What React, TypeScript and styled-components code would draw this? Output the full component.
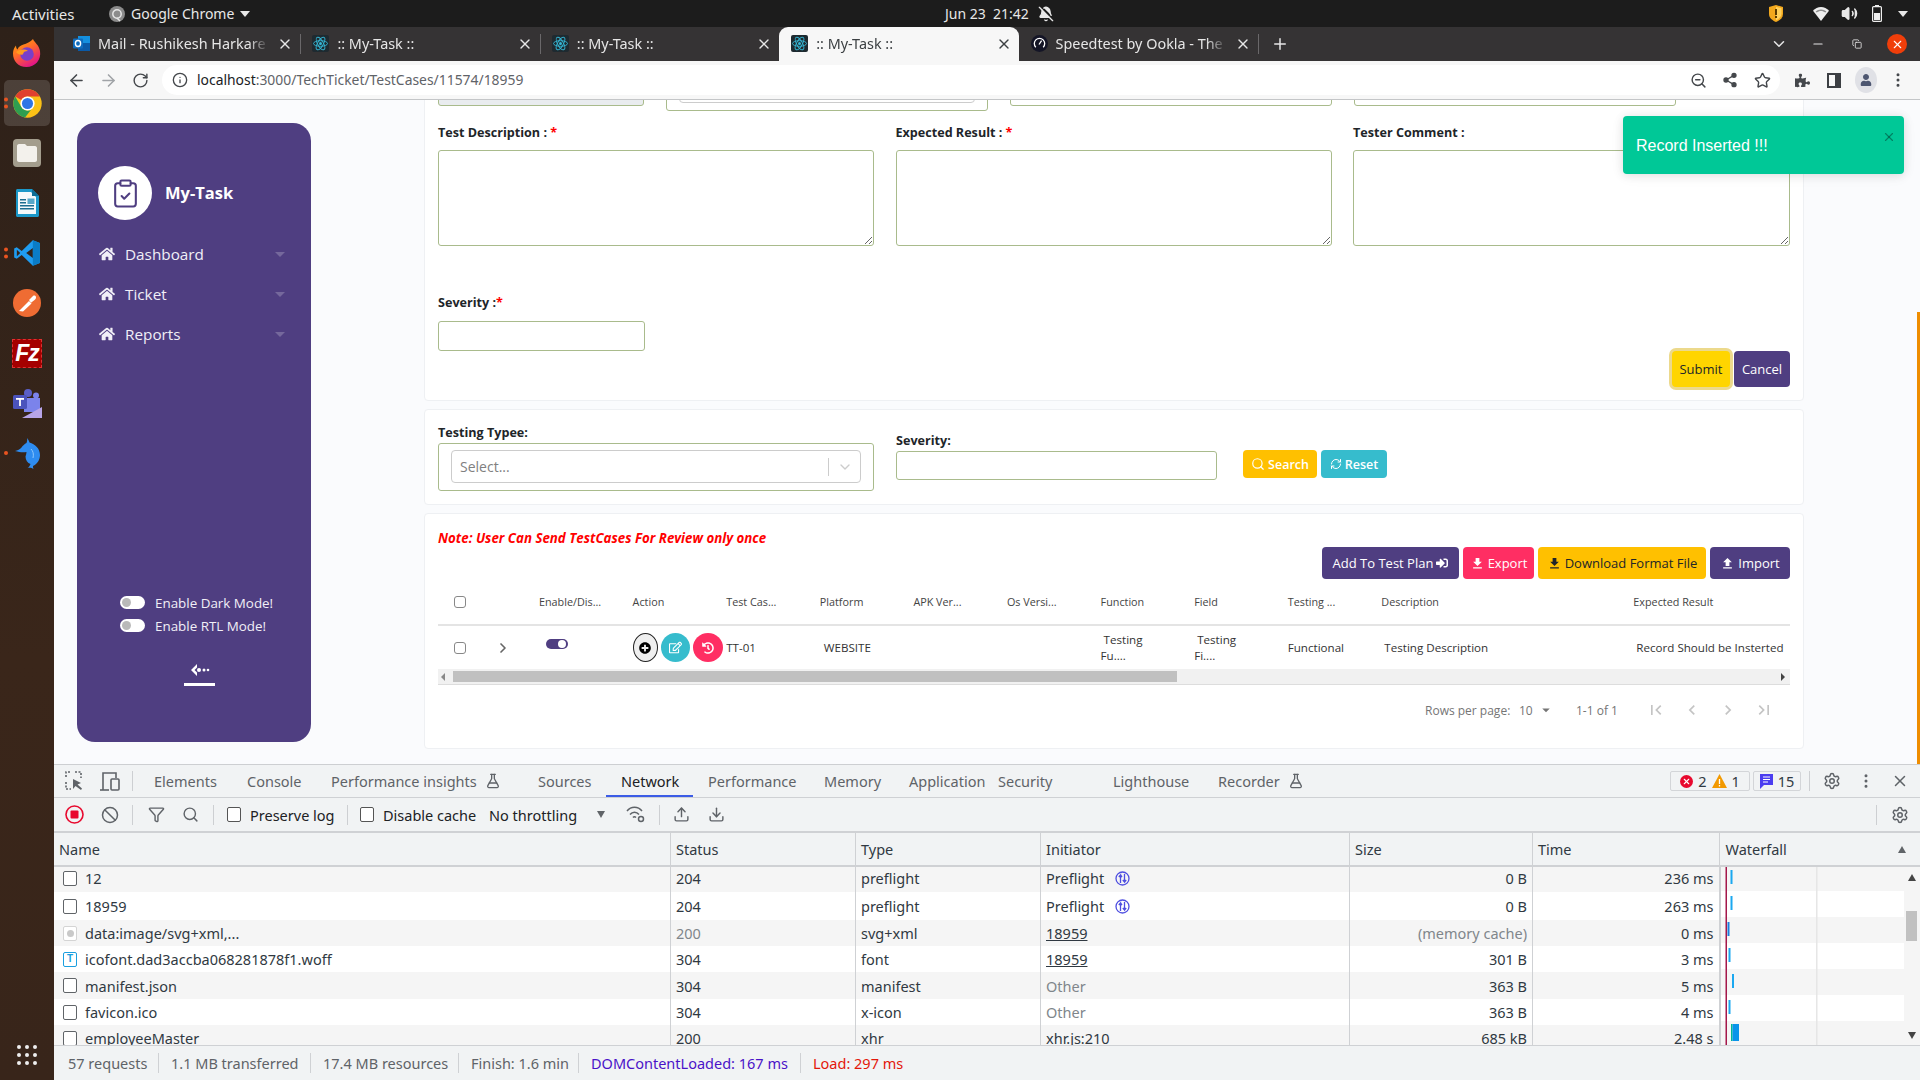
import React from 'react';
import styled, { createGlobalStyle } from 'styled-components';
import {
  ArrowLeft, ArrowRight, RotateCw, Info, ZoomOut, Share2, Star, X, ChevronDown, Minus, Plus,
  MoreVertical, Settings, Search, Upload, Download, Ban, FlaskConical, ChevronRight, RefreshCw,
  ClipboardCheck, BellOff, Volume2, Funnel, Copy,
} from 'lucide-react';
import { FaHome, FaPuzzlePiece, FaUser, FaSignInAlt, FaPlusCircle, FaRegEdit, FaHistory } from 'react-icons/fa';
import { MdFirstPage, MdLastPage, MdChevronLeft, MdChevronRight, MdArrowDropDown, MdFileDownload, MdFileUpload } from 'react-icons/md';

const PURPLE = '#4f3e81';
const FIELD = '#a9bb8c';
const CHROME_FONT = '"Noto Sans", "Open Sans", sans-serif';

const Global = createGlobalStyle`
  html, body { margin: 0; padding: 0; overflow: hidden; }
  body { font-family: "Open Sans", sans-serif; background: #1c1c1c; }
  * { box-sizing: border-box; }
`;

const Screen = styled.div`
  width: 1920px;
  height: 1080px;
  display: flex;
  flex-direction: column;
  overflow: hidden;
`;

/* ubuntu top bar */
const TopBar = styled.div`
  height: 27px;
  flex: none;
  display: flex;
  align-items: center;
  background: #1c1c1c;
  color: #e8e8e8;
  font: 14px ${CHROME_FONT};
`;
const TopLeft = styled.div`
  width: 945px;
  display: flex;
  align-items: center;
  padding-left: 12px;
`;
const AppName = styled.span`
  margin-left: 6px;
  display: flex;
  align-items: center;
`;
const ActivitiesLabel = styled.span`
  width: 97px;
  font-size: 15px;
`;
const Clock = styled.div`
  display: flex;
  align-items: center;
  gap: 9px;
  white-space: pre;
`;
const Tray = styled.div`
  margin-left: auto;
  display: flex;
  align-items: center;
  padding-right: 10px;
`;
const TraySlot = styled.span<{ $mr: number }>`
  width: 20px;
  height: 20px;
  display: flex;
  align-items: center;
  justify-content: center;
  margin-right: ${(p) => p.$mr}px;
`;
const DownCaret = styled.span`
  display: inline-block;
  border-left: 5px solid transparent;
  border-right: 5px solid transparent;
  border-top: 6px solid #e8e8e8;
  margin-left: 6px;
`;

const Body = styled.div`
  flex: 1;
  display: flex;
  min-height: 0;
`;

/* dock */
const Dock = styled.div`
  width: 54px;
  flex: none;
  display: flex;
  flex-direction: column;
  align-items: center;
  padding-top: 1px;
  background: linear-gradient(180deg, #2e2119, #3a261a 60%, #38251a);
`;
const DockSlot = styled.div<{ $active?: boolean }>`
  width: 46px;
  height: ${(p) => (p.$active ? 46 : 50)}px;
  margin: ${(p) => (p.$active ? '2px 0' : '0')};
  position: relative;
  display: flex;
  align-items: center;
  justify-content: center;
  border-radius: 5px;
  background: ${(p) => (p.$active ? 'rgba(255,255,255,.14)' : 'transparent')};
`;
const RunDots = styled.span`
  position: absolute;
  left: -0.5px;
  top: 50%;
  transform: translateY(-50%);
  display: flex;
  flex-direction: column;
  gap: 3px;
  i {
    width: 4px;
    height: 4px;
    border-radius: 50%;
    background: #e95420;
    display: block;
  }
`;
const FzTile = styled.div`
  width: 30px;
  height: 29px;
  background: #a50000;
  border: 1px dashed #d33;
  color: #fff;
  font: italic 700 23px/27px "Liberation Sans", sans-serif;
  text-align: center;
  letter-spacing: -1px;
`;
const AppGrid = styled.div`
  margin-top: auto;
  margin-bottom: 15px;
  display: grid;
  grid-template-columns: repeat(3, 4px);
  gap: 4px;
  i {
    width: 4px;
    height: 4px;
    background: #eee;
    border-radius: 50%;
    display: block;
  }
`;

const Main = styled.div`
  flex: 1;
  display: flex;
  flex-direction: column;
  min-width: 0;
`;

/* chrome tabs */
const TabStrip = styled.div`
  height: 34px;
  flex: none;
  display: flex;
  align-items: stretch;
  padding-left: 7px;
  background: #353334;
  color: #e6e6e6;
  font: 14.4px ${CHROME_FONT};
`;
const Tab = styled.div<{ $active?: boolean; $sep?: boolean }>`
  width: 239.4px;
  position: relative;
  display: flex;
  align-items: center;
  padding: 0 7px 1px 12px;
  gap: 8px;
  border-radius: 9px 9px 0 0;
  background: ${(p) => (p.$active ? '#f7f7f7' : 'transparent')};
  color: ${(p) => (p.$active ? '#3c4043' : '#e6e6e6')};
  &::after {
    content: '';
    display: ${(p) => (p.$sep ? 'block' : 'none')};
    position: absolute;
    right: -1px;
    top: 7px;
    bottom: 7px;
    width: 1px;
    background: #6a686a;
  }
`;
const TabTitle = styled.span`
  flex: 1;
  overflow: hidden;
  white-space: nowrap;
  mask-image: linear-gradient(90deg, #000 88%, transparent);
`;
const NewTab = styled.span`
  width: 44px;
  display: flex;
  align-items: center;
  justify-content: center;
`;
const WinControls = styled.div`
  margin-left: auto;
  display: flex;
  align-items: center;
  padding-right: 3px;
`;
const WinSlot = styled.span<{ $w: number }>`
  width: ${(p) => p.$w}px;
  display: flex;
  align-items: center;
  justify-content: center;
`;
const CloseDot = styled.span`
  width: 20px;
  height: 20px;
  border-radius: 50%;
  background: #f03e0a;
  color: #fff;
  display: flex;
  align-items: center;
  justify-content: center;
`;

/* chrome toolbar */
const Toolbar = styled.div`
  height: 39px;
  flex: none;
  display: flex;
  align-items: flex-start;
  padding: 4px 6px 0;
  background: #f7f7f7;
  border-bottom: 1px solid #c4c6c8;
`;
const ToolBtn = styled.span<{ $off?: boolean }>`
  width: 32px;
  height: 30px;
  flex: none;
  display: flex;
  align-items: center;
  justify-content: center;
  color: ${(p) => (p.$off ? '#a0a3a7' : '#44474b')};
`;
const Omnibox = styled.div`
  width: 1618px;
  height: 30px;
  margin: 0 6px;
  flex: none;
  display: flex;
  align-items: center;
  padding: 0 2px 0 10px;
  background: #fff;
  border-radius: 15px;
  font: 13.9px ${CHROME_FONT};
  color: #5f6368;
`;
const UrlText = styled.span`
  margin-left: 9px;
  margin-top: -1px;
  b {
    font-weight: 400;
    color: #202124;
  }
`;
const OmniRight = styled.div`
  margin-left: auto;
  display: flex;
`;
const Avatar = styled.span`
  width: 22px;
  height: 26px;
  border-radius: 50%;
  background: #e0e1e6;
  color: #4d5670;
  display: flex;
  align-items: center;
  justify-content: center;
`;
const SidePanelIcon = styled.span`
  width: 14px;
  height: 15px;
  border: 2px solid #3c3f43;
  border-right-width: 6px;
  display: block;
`;

/* page */
const Page = styled.div`
  height: 664px;
  flex: none;
  position: relative;
  overflow: hidden;
  display: flex;
  align-items: flex-start;
  background: #fafbfd;
`;
const Sidebar = styled.aside`
  width: 234px;
  height: 619px;
  margin: 23px 0 0 23px;
  flex: none;
  display: flex;
  flex-direction: column;
  padding: 43px 0 56px;
  background: ${PURPLE};
  border-radius: 18px;
  color: #fff;
`;
const Brand = styled.div`
  display: flex;
  align-items: center;
  gap: 14px;
  padding-left: 21px;
  margin-bottom: 14px;
`;
const BrandCircle = styled.span`
  width: 54px;
  height: 54px;
  border-radius: 50%;
  background: #fff;
  color: ${PURPLE};
  display: flex;
  align-items: center;
  justify-content: center;
`;
const BrandName = styled.span`
  margin: -2px 0 0 -1px;
  font-size: 16.5px;
  font-weight: 700;
`;
const MenuItem = styled.div`
  height: 40px;
  display: flex;
  align-items: center;
  gap: 10px;
  padding: 0 26px 0 22px;
  font-size: 15.3px;
  color: #f1eff7;
`;
const MenuCaret = styled.span`
  margin-left: auto;
  border-left: 5px solid transparent;
  border-right: 5px solid transparent;
  border-top: 5px solid rgba(255, 255, 255, 0.22);
`;
const ModeList = styled.div`
  margin-top: auto;
  padding-left: 43px;
`;
const ModeRow = styled.div`
  height: 23px;
  display: flex;
  align-items: center;
  gap: 10px;
  font-size: 13.4px;
  color: #f1eff7;
`;
const SideSwitch = styled.span`
  width: 25px;
  height: 13px;
  border-radius: 7px;
  background: #fff;
  display: flex;
  align-items: center;
  padding-left: 2px;
  &::before {
    content: '';
    width: 9px;
    height: 9px;
    border-radius: 50%;
    background: #b9b9b9;
  }
`;
const CollapseBtn = styled.div`
  width: 31px;
  margin: 27px 0 0 107px;
  display: flex;
  justify-content: center;
  padding-bottom: 7px;
  border-bottom: 3px solid #fff;
`;

const Content = styled.div`
  width: 1380px;
  margin: -41px 0 0 113px;
  flex: none;
  display: flex;
  flex-direction: column;
  gap: 8px;
  color: #212529;
`;
const Card = styled.section`
  padding: 0 13px 13px;
  background: #fff;
  border: 1px solid #eef0f3;
  border-radius: 4px;
`;
const StubRow = styled.div`
  display: grid;
  grid-template-columns: 206px 322px 322px 322px;
  column-gap: 22px;
  align-items: start;
  height: 51px;
`;
const Stub = styled.div<{ $grey?: boolean; $boxed?: boolean }>`
  height: ${(p) => (p.$boxed ? 51 : 46)}px;
  padding: 0 12px 7px;
  display: flex;
  align-items: flex-end;
  border: 1px solid ${FIELD};
  border-radius: 3px;
  background: ${(p) => (p.$grey ? '#e9ecef' : '#fff')};
`;
const StubInner = styled.div`
  width: 100%;
  height: 30px;
  border: 1px solid #ccc;
  border-radius: 4px;
`;
const FieldGrid = styled.div`
  display: grid;
  grid-template-columns: 436px 436px 437px;
  column-gap: 21.5px;
  margin-top: 13px;
`;
const Label = styled.label`
  display: block;
  height: 18px;
  font-size: 12.6px;
  font-weight: 700;
  line-height: 18px;
  color: #212529;
  white-space: pre;
  span {
    color: #f00;
  }
`;
const TextBox = styled.textarea`
  display: block;
  width: 100%;
  height: 96px;
  margin-top: 8px;
  border: 1px solid ${FIELD};
  border-radius: 3px;
  background: #fff;
  outline: none;
`;
const Input = styled.input<{ $w: number; $h: number; $mt: number }>`
  display: block;
  width: ${(p) => p.$w}px;
  height: ${(p) => p.$h}px;
  margin-top: ${(p) => p.$mt}px;
  border: 1px solid ${FIELD};
  border-radius: 3px;
  background: #fff;
  outline: none;
`;
const SeverityBlock = styled.div`
  margin-top: 48px;
`;
const FormActions = styled.div`
  display: flex;
  justify-content: flex-end;
  gap: 4px;
`;
const ActionBtn = styled.button<{ $bg: string; $fg?: string; $w: number; $h: number; $ring?: boolean; $weight?: number }>`
  width: ${(p) => p.$w}px;
  height: ${(p) => p.$h}px;
  padding: 0;
  border: none;
  border-radius: 4px;
  background: ${(p) => p.$bg};
  color: ${(p) => p.$fg || '#fff'};
  font: ${(p) => p.$weight || 400} ${(p) => (p.$weight ? 12.5 : 13)}px "Open Sans", sans-serif;
  display: flex;
  align-items: center;
  justify-content: center;
  gap: 3px;
  flex: none;
  box-shadow: ${(p) => (p.$ring ? '0 0 0 3px #ecd98c' : 'none')};
`;

const FilterCard = styled(Card)`
  height: 96px;
  padding: 14px 13px 0;
  display: flex;
  align-items: flex-start;
`;
const SelectBox = styled.div`
  width: 436px;
  height: 48px;
  margin-top: 1px;
  padding: 6px 12px;
  border: 1px solid ${FIELD};
  border-radius: 3px;
`;
const SelectInner = styled.div`
  height: 33px;
  display: flex;
  align-items: center;
  padding-left: 8px;
  border: 1px solid #ccc;
  border-radius: 4px;
  font-size: 14px;
  color: #808080;
`;
const SelectSep = styled.span`
  margin-left: auto;
  height: 18px;
  width: 1px;
  background: #ccc;
`;
const SelectArrow = styled.span`
  width: 31px;
  display: flex;
  justify-content: center;
  color: #ccc;
`;
const SeverityFilter = styled.div`
  margin-left: 22px;
  padding-top: 8px;
`;
const FilterActions = styled.div`
  margin: 26px 0 0 26px;
  display: flex;
  gap: 4px;
`;

const NoteText = styled.div`
  padding-top: 15px;
  height: 33px;
  line-height: 18px;
  font-size: 13.3px;
  font-weight: 700;
  font-style: italic;
  color: #f00;
  white-space: nowrap;
`;
const TableActions = styled.div`
  height: 32px;
  display: flex;
  justify-content: flex-end;
  gap: 4px;
`;
const GridRow = styled.div<{ $h: number; $line?: boolean }>`
  height: ${(p) => p.$h}px;
  display: grid;
  grid-template-columns: 48px 48px repeat(9, 93.6px) 252px 161.6px;
  align-items: center;
  border-bottom: ${(p) => (p.$line ? '2px solid #e4e4e4' : 'none')};
`;
const HeadCell = styled.div`
  padding-left: 5px;
  font-size: 10.8px;
  color: #444;
  white-space: nowrap;
`;
const DataCell = styled.div<{ $pad?: number }>`
  padding-left: ${(p) => p.$pad ?? 5}px;
  font-size: 11.6px;
  line-height: 16px;
  color: #333;
  white-space: pre;
`;
const BoxCell = styled.div`
  padding-left: 16px;
`;
const TickBox = styled.span`
  display: block;
  width: 12px;
  height: 12px;
  border: 1.5px solid #888;
  border-radius: 3px;
  background: #fff;
`;
const ExpandCell = styled.div`
  padding-left: 9px;
  color: #666;
  display: flex;
`;
const RowSwitch = styled.span`
  margin-left: 7px;
  margin-top: -7px;
  width: 22px;
  height: 10px;
  padding: 1px 2px;
  border-radius: 6px;
  background: ${PURPLE};
  display: flex;
  justify-content: flex-end;
  &::after {
    content: '';
    width: 8px;
    height: 8px;
    border-radius: 50%;
    background: #fff;
  }
`;
const ActionCell = styled.div`
  padding-left: 5px;
  display: flex;
  gap: 3px;
`;
const RoundBtn = styled.span<{ $bg: string; $w: number; $plain?: boolean }>`
  width: ${(p) => p.$w}px;
  height: 29px;
  flex: none;
  border-radius: 50%;
  background: ${(p) => p.$bg};
  border: ${(p) => (p.$plain ? '1px solid #222' : 'none')};
  color: ${(p) => (p.$plain ? '#000' : '#fff')};
  display: flex;
  align-items: center;
  justify-content: center;
`;
const HScroll = styled.div`
  height: 16px;
  display: flex;
  align-items: center;
  background: #f1f1f1;
  border-bottom: 1px solid #ddd;
`;
const HThumb = styled.span`
  width: 724px;
  height: 11px;
  background: #c0c0c0;
`;
const ScrollArrow = styled.span<{ $dir: 'left' | 'right' }>`
  width: 0;
  height: 0;
  border-top: 4px solid transparent;
  border-bottom: 4px solid transparent;
  ${(p) => (p.$dir === 'left' ? 'border-right: 4px solid #888; margin: 0 8px 0 3px;' : 'border-left: 4px solid #444; margin: 0 5px 0 auto;')}
`;
const Pager = styled.div`
  height: 50px;
  display: flex;
  align-items: center;
  justify-content: flex-end;
  padding-right: 8px;
  font-size: 12px;
  color: #757575;
`;
const PagerText = styled.span<{ $w: number }>`
  width: ${(p) => p.$w}px;
  display: flex;
  align-items: center;
  gap: 4px;
  white-space: nowrap;
`;
const PagerBtn = styled.span`
  width: 36px;
  display: flex;
  justify-content: center;
  color: #c4c4c4;
`;

const Toast = styled.div`
  position: absolute;
  top: 16px;
  right: 16px;
  width: 281px;
  height: 58px;
  padding: 2px 13px 0;
  display: flex;
  align-items: center;
  background: #00c897;
  border-radius: 4px;
  box-shadow: 0 1px 10px rgba(0, 0, 0, 0.1), 0 2px 15px rgba(0, 0, 0, 0.05);
  font: 16px "Liberation Sans", sans-serif;
  color: #fff;
`;
const ToastClose = styled.span`
  position: absolute;
  top: 14px;
  right: 8px;
  color: rgba(0, 0, 0, 0.35);
  display: flex;
`;
const PageThumb = styled.span`
  position: absolute;
  top: 212px;
  right: 0;
  bottom: 0;
  width: 3px;
  background: #ef8d00;
`;

/* devtools */
const Dev = styled.div`
  flex: 1;
  min-height: 0;
  display: flex;
  flex-direction: column;
  background: #f1f3f4;
  border-top: 1px solid #cdcfd2;
  font: 14.5px ${CHROME_FONT};
  color: #303942;
`;
const DevBar = styled.div<{ $h: number; $thick?: boolean }>`
  height: ${(p) => p.$h}px;
  flex: none;
  display: flex;
  align-items: center;
  padding: 0 3px;
  border-bottom: ${(p) => (p.$thick ? 2 : 1)}px solid #cfd1d4;
`;
const Slot = styled.span<{ $w?: number; $ml?: number; $color?: string }>`
  width: ${(p) => p.$w ?? 34}px;
  margin-left: ${(p) => p.$ml ?? 0}px;
  flex: none;
  display: flex;
  align-items: center;
  justify-content: center;
  color: ${(p) => p.$color || '#5f6368'};
`;
const VSep = styled.span<{ $l: number; $r: number; $auto?: boolean }>`
  width: 1px;
  height: 20px;
  flex: none;
  margin: 0 ${(p) => p.$r}px 0 ${(p) => (p.$auto ? 'auto' : `${p.$l}px`)};
  background: #cdcfd2;
`;
const DevTab = styled.span<{ $w: number; $on?: boolean }>`
  width: ${(p) => p.$w}px;
  height: 100%;
  flex: none;
  display: flex;
  align-items: center;
  gap: 8px;
  padding-left: 15px;
  color: ${(p) => (p.$on ? '#202124' : '#5f6368')};
  white-space: nowrap;
  box-shadow: ${(p) => (p.$on ? 'inset 0 -2px 0 #3c5ce6' : 'none')};
`;
const BadgeBox = styled.span<{ $w: number; $ml?: number; $auto?: boolean }>`
  width: ${(p) => p.$w}px;
  height: 20px;
  flex: none;
  margin-left: ${(p) => (p.$auto ? 'auto' : `${p.$ml ?? 0}px`)};
  display: flex;
  align-items: center;
  justify-content: center;
  gap: 5px;
  border: 1px solid #d3d5d8;
  border-radius: 2px;
  color: #303942;
`;
const ErrorDot = styled.span`
  width: 13px;
  height: 13px;
  border-radius: 50%;
  background: #e8092e;
  color: #fff;
  display: flex;
  align-items: center;
  justify-content: center;
`;
const CheckLabel = styled.label<{ $w: number; $ml: number }>`
  width: ${(p) => p.$w}px;
  margin-left: ${(p) => p.$ml}px;
  flex: none;
  display: flex;
  align-items: center;
  gap: 9px;
  white-space: nowrap;
  color: #202124;
`;
const DevCheck = styled.span`
  width: 14px;
  height: 15px;
  flex: none;
  display: block;
  border: 1.5px solid #555;
  border-radius: 2px;
  background: #fff;
`;
const Throttle = styled.span`
  width: 105px;
  flex: none;
  color: #202124;
`;
const DownTri = styled.span<{ $up?: boolean; $color?: string }>`
  display: block;
  border-left: 4px solid transparent;
  border-right: 4px solid transparent;
  ${(p) => (p.$up ? 'border-bottom' : 'border-top')}: 7px solid ${(p) => p.$color || '#606468'};
`;
const NetGrid = styled.div<{ $h: number; $alt?: boolean; $pb?: number }>`
  height: ${(p) => p.$h}px;
  flex: none;
  display: grid;
  grid-template-columns: 617px 185px 185px 309px 183px 186.5px;
  background: ${(p) => (p.$alt ? '#f5f5f5' : '#fff')};
  & > * {
    padding-bottom: ${(p) => p.$pb ?? 0}px;
  }
`;
const NetCell = styled.div<{ $right?: boolean; $muted?: boolean; $first?: boolean }>`
  display: flex;
  align-items: center;
  gap: 8px;
  padding-left: ${(p) => (p.$first ? 9 : 5)}px;
  padding-right: 5px;
  justify-content: ${(p) => (p.$right ? 'flex-end' : 'flex-start')};
  border-right: 1px solid #cfd1d4;
  white-space: nowrap;
  color: ${(p) => (p.$muted ? '#80868b' : '#303942')};
  overflow: hidden;
`;
const NetHead = styled.div`
  height: 34px;
  flex: none;
  display: flex;
  border-bottom: 2px solid #cfd1d4;
`;
const HeadGrid = styled(NetGrid)`
  background: #f1f3f4;
  height: 32px;
  & > div {
    padding-left: 5px;
  }
`;
const WaterHead = styled.div`
  flex: 1;
  display: flex;
  align-items: center;
  justify-content: space-between;
  padding: 0 14px 0 6px;
`;
const NetBody = styled.div`
  height: 179px;
  flex: none;
  display: flex;
  overflow: hidden;
  border-bottom: 1px solid #cfd1d4;
`;
const NetRows = styled.div`
  width: 1665.5px;
  flex: none;
  display: flex;
  flex-direction: column;
  overflow: hidden;
`;
const NetScroll = styled.div`
  width: 16px;
  flex: none;
  display: flex;
  flex-direction: column;
  align-items: center;
  background: #f5f5f5;
  padding: 7px 0 6px;
`;
const NetThumb = styled.span`
  width: 11px;
  height: 30px;
  margin-top: 30px;
  background: #c1c1c1;
`;
const BottomTri = styled.span`
  margin-top: auto;
`;
const SmallIcon = styled.span<{ $kind: 'doc' | 'font' | 'img' }>`
  width: 14px;
  height: 15px;
  flex: none;
  display: flex;
  align-items: center;
  justify-content: center;
  border: ${(p) => (p.$kind === 'font' ? '1.5px solid #1a9fe0' : p.$kind === 'img' ? '1px solid #d4d4d4' : '1.5px solid #606468')};
  border-radius: 2px;
  background: #fff;
  font: 700 10px/1 "Liberation Sans", sans-serif;
  color: #1a9fe0;
  &::before {
    content: '';
    display: ${(p) => (p.$kind === 'img' ? 'block' : 'none')};
    width: 7px;
    height: 7px;
    border-radius: 50%;
    background: #c9c9c9;
  }
`;
const LinkText = styled.span`
  text-decoration: underline;
`;
const PreflightMark = styled.span`
  margin-left: 3px;
  display: flex;
`;
const StatusBar = styled.div`
  flex: 1;
  display: flex;
  align-items: center;
  padding-left: 2px;
  color: #5f6368;
`;
const StatusItem = styled.span<{ $w?: number; $color?: string; $last?: boolean }>`
  width: ${(p) => (p.$w ? `${p.$w}px` : 'auto')};
  height: 20px;
  line-height: 20px;
  flex: none;
  padding-left: 12px;
  white-space: nowrap;
  border-right: ${(p) => (p.$last ? 'none' : '1px solid #cfd1d4')};
  color: ${(p) => p.$color || '#5f6368'};
`;

/* drawn marks */
const ReactIcon = () => (
  <svg width="17" height="17" viewBox="0 0 17 17">
    <rect width="17" height="17" rx="2" fill="#1e2a30" />
    <g fill="none" stroke="#35b7d5" strokeWidth="0.9">
      <ellipse cx="8.5" cy="8.5" rx="7" ry="2.8" />
      <ellipse cx="8.5" cy="8.5" rx="7" ry="2.8" transform="rotate(60 8.5 8.5)" />
      <ellipse cx="8.5" cy="8.5" rx="7" ry="2.8" transform="rotate(120 8.5 8.5)" />
    </g>
    <circle cx="8.5" cy="8.5" r="1.5" fill="#35b7d5" />
  </svg>
);
const OutlookIcon = () => (
  <svg width="17" height="17" viewBox="0 0 17 17">
    <rect x="5" y="1" width="12" height="15" fill="#1490df" />
    <rect x="5" y="8" width="12" height="8" fill="#0a5aa8" />
    <rect x="0" y="3.5" width="10" height="10" rx="1" fill="#0f6cbd" />
    <ellipse cx="5" cy="8.5" rx="2.6" ry="3" fill="none" stroke="#fff" strokeWidth="1.4" />
  </svg>
);
const OoklaIcon = () => (
  <svg width="17" height="17" viewBox="0 0 17 17">
    <circle cx="8.5" cy="8.5" r="8.5" fill="#141526" />
    <path d="M4.8 12.2a5.2 5.2 0 1 1 7.4 0" fill="none" stroke="#fff" strokeWidth="1.3" />
    <path d="M8 9.5 10.6 5.6" stroke="#fff" strokeWidth="1.3" />
  </svg>
);
const ChromeMini = () => (
  <svg width="16" height="16" viewBox="0 0 16 16">
    <circle cx="8" cy="8" r="8" fill="#8b8b8b" />
    <circle cx="8" cy="8" r="4.2" fill="none" stroke="#e5e5e5" strokeWidth="1.5" />
    <path d="M8 12 11 15" stroke="#e5e5e5" strokeWidth="1.5" />
  </svg>
);
const ShieldIcon = () => (
  <svg width="14" height="17" viewBox="0 0 14 17">
    <path d="M7 0 14 2v7c0 4-3.5 6.500-7 8-3.500-1.500-7-4-7-8V2z" fill="#f2a81d" />
    <path d="M7 1.800 12.500 3.300v5.500c0 3-2.800 5.200-5.500 6.500z" fill="#ffd15c" />
    <rect x="6" y="4" width="2" height="6" fill="#5a3b00" />
    <rect x="6" y="11" width="2" height="2" fill="#5a3b00" />
  </svg>
);
const WifiFull = () => (
  <svg width="16" height="14" viewBox="0 0 16 14">
    <path d="M0 3.800C2 1.500 5 0 8 0s6 1.500 8 3.800L8 14z" fill="#eee" />
    <path d="M2.600 4.500C4 3.200 6 2.400 8 2.400s4 .8 5.400 2.100l-1 1.100C11 4.500 9.500 4 8 4s-3 .5-4.400 1.600z" fill="#1c1c1c" opacity=".45" />
  </svg>
);
const BatteryIcon = () => (
  <svg width="10" height="17" viewBox="0 0 10 17">
    <rect x="3" y="0" width="4" height="2" fill="#eee" />
    <rect x="0.600" y="1.600" width="8.800" height="14.800" rx="1" fill="none" stroke="#eee" strokeWidth="1.200" />
    <rect x="2" y="8" width="6" height="7" fill="#eee" />
  </svg>
);
const FirefoxIcon = () => (
  <svg width="30" height="30" viewBox="0 0 30 30">
    <defs>
      <linearGradient id="ff" x1="0" y1="0" x2="0.6" y2="1">
        <stop offset="0" stopColor="#ffb000" />
        <stop offset="0.5" stopColor="#ff6a2a" />
        <stop offset="1" stopColor="#e31587" />
      </linearGradient>
    </defs>
    <path d="M21 1c1 3 6 6 7 12 1.500 9-5 16-13.500 16C6 29 1 23 1 15.500 1 12 2.500 9 4 7.500c0 2 .5 3 1.500 4 1-3 3.500-4 6-5 3-1 7-2.500 9.500-5.500z" fill="url(#ff)" />
    <circle cx="15" cy="16" r="6.800" fill="#7a3fc9" />
    <path d="M4 14c4-3 9-3 12-1-3 0-5 1-5 3.500C8 17 5 16 4 14z" fill="#ff9a1f" />
  </svg>
);
const ChromeIcon = () => (
  <svg width="31" height="31" viewBox="0 0 24 24">
    <circle cx="12" cy="12" r="11" fill="#fbc116" />
    <path d="M12 1a11 11 0 0 1 9.530 5.500H12a5.500 5.500 0 0 0-4.760 2.750L2.470 6.500A11 11 0 0 1 12 1z" fill="#e0402f" />
    <path d="M2.470 6.500 7.240 14.750A5.500 5.500 0 0 0 14.760 16.760L10.100 22.830A11 11 0 0 1 2.470 6.500z" fill="#2f9e50" />
    <circle cx="12" cy="12" r="5.500" fill="#fff" />
    <circle cx="12" cy="12" r="4.300" fill="#2f75e6" />
  </svg>
);
const FilesIcon = () => (
  <svg width="28" height="28" viewBox="0 0 28 28">
    <rect width="28" height="28" rx="4" fill="#a39d8d" />
    <path d="M4 7c0-1 .8-2 2-2h6l2 2h8c1.200 0 2 1 2 2v12c0 1-.8 2-2 2H6c-1.200 0-2-1-2-2z" fill="#f3f1ec" />
  </svg>
);
const WriterIcon = () => (
  <svg width="24" height="28" viewBox="0 0 24 28">
    <path d="M1 1.500C1 .7 1.700 0 2.500 0H17l7 7v19.500c0 .8-.7 1.500-1.500 1.500h-20C1.700 28 1 27.300 1 26.500z" fill="#1b98c9" />
    <path d="M3 3h13l5 5v17H3z" fill="#f4f9fb" />
    <path d="M17 0l7 7h-7z" fill="#0f6d95" />
    <path d="M5 10h6v1.500H5zm0 3h6v1.500H5zm0 3h14v1.500H5zm0 3h14v1.500H5z" fill="#1b6d90" />
    <rect x="12.500" y="9.500" width="7" height="5.500" fill="#57a7c8" />
  </svg>
);
const VscodeIcon = () => (
  <svg width="28" height="28" viewBox="0 0 24 24">
    <path d="M17 1 7.500 10.300 3.200 7 1 8.100v7.800L3.200 17l4.300-3.300L17 23l6-2.400V3.400zM3.300 14.800V9.200L6.200 12zM17 16.200 11.300 12 17 7.800z" fill="#1f9cf0" />
    <path d="M17 1l6 2.400v17.200L17 23z" fill="#0a7cc7" />
  </svg>
);
const PostmanIcon = () => (
  <svg width="28" height="28" viewBox="0 0 28 28">
    <circle cx="14" cy="14" r="14" fill="#ef6c33" />
    <path d="M6 22 16 12l2.500 2.500L10 22.500z" fill="#fff" />
    <path d="M16 11l4-4c1.200-.8 3-.5 3 1.500 0 1-.7 2-1.500 2.500l-3.500 2.800z" fill="#fff" />
  </svg>
);
const TeamsIcon = () => (
  <svg width="30" height="30" viewBox="0 0 30 30">
    <circle cx="16" cy="5" r="4" fill="#5b5fc7" />
    <circle cx="24" cy="7.500" r="3" fill="#7b83eb" />
    <rect x="12" y="10" width="16" height="14" fill="#7b83eb" />
    <path d="M10 30 30 19v11z" fill="#b7a4e8" />
    <rect x="1" y="7" width="14" height="14" rx="1.500" fill="#4b53bc" />
    <rect x="4" y="10" width="8" height="1.800" fill="#fff" />
    <rect x="7.100" y="10" width="1.800" height="8" fill="#fff" />
  </svg>
);
const DolphinIcon = () => (
  <svg width="27" height="31" viewBox="0 0 27 31">
    <path d="M13 0c1 1 2 3 2.500 4.500C21 6 26 10.500 26 17c0 5-3 9-7 11 0 1 0 2 .5 3-1.500-1-3.500-1.500-6-1 1.500-1 2.500-2.500 3-4-3-1-5-4-5-7.500.5-1.500 1-3 1-4.500-3 .5-6.500.5-11.500-1 2.500-.5 5-1.500 6.500-3.500C9 7.500 10.500 6 12.500 5 13 3.500 13.500 1.500 13 0z" fill="#2e8cf0" />
    <path d="M17 11c2 2 3 5 2 9" fill="none" stroke="#8cc6fa" strokeWidth="1" />
  </svg>
);
const CollapseIcon = () => (
  <svg width="20" height="12" viewBox="0 0 20 12">
    <path d="M7 0 1 6l6 6V8.500L4.500 6 7 3.500z" fill="#fff" />
    <circle cx="9" cy="6" r="2" fill="#fff" />
    <circle cx="14" cy="6" r="1.500" fill="#fff" />
    <circle cx="18" cy="6" r="1.300" fill="#fff" />
  </svg>
);
const InspectIcon = () => (
  <svg width="19" height="20" viewBox="0 0 19 20" fill="none" stroke="#5f6368" strokeWidth="1.600">
    <path d="M1 6V1h5M10 1h6v6M1 11v7h5" strokeDasharray="2 1.500" />
    <path d="M8 8v10l2.500-3 5.500 4 1-1.500-4.500-4 3.500-1.500z" fill="#5f6368" stroke="none" />
  </svg>
);
const DeviceIcon = () => (
  <svg width="20" height="19" viewBox="0 0 20 19" fill="none" stroke="#5f6368" strokeWidth="1.600">
    <path d="M3 18V1h13v5" />
    <path d="M0 18h9" />
    <rect x="11" y="7" width="8" height="11" rx="1" />
  </svg>
);
const PreflightIcon = () => (
  <svg width="15" height="15" viewBox="0 0 15 15" fill="none" stroke="#4f4fe0" strokeWidth="1.300">
    <circle cx="7.500" cy="7.500" r="6.500" />
    <path d="M5.500 12V4L3.800 6M5.500 4 7 6M9.500 3v8l-1.700-2M9.500 11l1.700-2" />
  </svg>
);
const WifiGear = () => (
  <svg width="20" height="19" viewBox="0 0 20 19" fill="none" stroke="#5f6368" strokeWidth="1.500">
    <path d="M1 6c4-5 11-5 15 0M4 9.500c2.500-3 6.500-3 9 0M7 12.500c.8-1 2-1 3 0" />
    <circle cx="15" cy="14" r="2.500" />
  </svg>
);
const MessageIcon = () => (
  <svg width="13" height="15" viewBox="0 0 13 15">
    <path d="M0 0h13v11H4l-4 4z" fill="#4b3df0" />
    <path d="M3 3h7M3 5.500h7M3 8h5" stroke="#fff" strokeWidth="1" />
  </svg>
);
const WarnIcon = () => (
  <svg width="15" height="14" viewBox="0 0 15 14">
    <path d="M7.500 0 15 14H0z" fill="#f29900" />
    <path d="M7.500 5v5M7.500 11v1.500" stroke="#fff" strokeWidth="1.300" />
  </svg>
);
const Waterfall = () => (
  <svg width="184" height="179" viewBox="0 0 184 179">
    <rect width="184" height="179" fill="#f5f5f5" />
    <rect y="24" width="184" height="26" fill="#fff" />
    <rect y="76" width="184" height="26" fill="#fff" />
    <rect y="128" width="184" height="26" fill="#fff" />
    <rect x="96" width="1.500" height="179" fill="#e6e6e6" />
    <rect x="0" width="1" height="179" fill="#cfd1d4" />
    <rect x="5.500" width="1.500" height="179" fill="#a4174a" />
    <rect x="10.500" y="3" width="2" height="14" fill="#1ba8f0" />
    <rect x="10.500" y="29" width="2" height="14" fill="#1ba8f0" />
    <rect x="7.500" y="55" width="2" height="14" fill="#1a7fe0" />
    <rect x="8.500" y="81" width="2" height="14" fill="#1ba8f0" />
    <rect x="12" y="107" width="2" height="14" fill="#1ba8f0" />
    <rect x="8.500" y="133" width="2" height="14" fill="#1ba8f0" />
    <rect x="11" y="157" width="1.500" height="17" fill="#00b894" />
    <rect x="12.500" y="157" width="6.500" height="17" fill="#0a94ea" />
  </svg>
);

const tabs = [
  { title: 'Mail - Rushikesh Harkare - Outlook', icon: <OutlookIcon />, sep: true },
  { title: ':: My-Task ::', icon: <ReactIcon />, sep: true },
  { title: ':: My-Task ::', icon: <ReactIcon /> },
  { title: ':: My-Task ::', icon: <ReactIcon />, active: true },
  { title: 'Speedtest by Ookla - The Global', icon: <OoklaIcon />, sep: true },
];

const heads = ['Enable/Dis...', 'Action', 'Test Cas...', 'Platform', 'APK Ver...', 'Os Versi...', 'Function', 'Field', 'Testing ...', 'Description', 'Expected Result'];

const devTabs = [
  { label: 'Elements', w: 93 },
  { label: 'Console', w: 84 },
  { label: 'Performance insights', w: 207, flask: true },
  { label: 'Sources', w: 83 },
  { label: 'Network', w: 87, on: true },
  { label: 'Performance', w: 116 },
  { label: 'Memory', w: 85 },
  { label: 'Application', w: 89 },
  { label: 'Security', w: 115 },
  { label: 'Lighthouse', w: 105 },
  { label: 'Recorder', w: 110, flask: true },
];

const requests = [
  { name: '12', kind: 'doc', status: '204', type: 'preflight', init: 'Preflight', size: '0 B', time: '236 ms', h: 25, pb: 3, alt: true },
  { name: '18959', kind: 'doc', status: '204', type: 'preflight', init: 'Preflight', size: '0 B', time: '263 ms', h: 28 },
  { name: 'data:image/svg+xml,...', kind: 'img', status: '200', type: 'svg+xml', init: '18959', link: true, size: '(memory cache)', time: '0 ms', h: 26, alt: true, faded: true },
  { name: 'icofont.dad3accba068281878f1.woff', kind: 'font', status: '304', type: 'font', init: '18959', link: true, size: '301 B', time: '3 ms', h: 26 },
  { name: 'manifest.json', kind: 'doc', status: '304', type: 'manifest', init: 'Other', other: true, size: '363 B', time: '5 ms', h: 27, alt: true },
  { name: 'favicon.ico', kind: 'doc', status: '304', type: 'x-icon', init: 'Other', other: true, size: '363 B', time: '4 ms', h: 26 },
  { name: 'employeeMaster', kind: 'doc', status: '200', type: 'xhr', init: 'xhr.js:210', link: true, size: '685 kB', time: '2.48 s', h: 26, alt: true },
] as const;

function NetRow({ r }: { r: (typeof requests)[number] }) {
  const faded = 'faded' in r;
  return (
    <NetGrid $h={r.h} $alt={'alt' in r} $pb={'pb' in r ? r.pb : 0}>
      <NetCell $first>
        <SmallIcon $kind={r.kind}>{r.kind === 'font' ? 'T' : null}</SmallIcon>
        <span>{r.name}</span>
      </NetCell>
      <NetCell $muted={faded}>{r.status}</NetCell>
      <NetCell>{r.type}</NetCell>
      <NetCell $muted={'other' in r}>
        {'link' in r ? <LinkText>{r.init}</LinkText> : r.init}
        {r.init === 'Preflight' && <PreflightMark><PreflightIcon /></PreflightMark>}
      </NetCell>
      <NetCell $right $muted={faded}>{r.size}</NetCell>
      <NetCell $right>{r.time}</NetCell>
    </NetGrid>
  );
}

export default function App() {
  return (
    <Screen>
      <Global />
      <TopBar>
        <TopLeft>
          <ActivitiesLabel>Activities</ActivitiesLabel>
          <ChromeMini />
          <AppName>Google Chrome<DownCaret /></AppName>
        </TopLeft>
        <Clock>
          <span>Jun 23  21:42</span>
          <BellOff size={16} fill="#e8e8e8" />
        </Clock>
        <Tray>
          <TraySlot $mr={25}><ShieldIcon /></TraySlot>
          <TraySlot $mr={8}><WifiFull /></TraySlot>
          <TraySlot $mr={8}><Volume2 size={17} fill="#e8e8e8" /></TraySlot>
          <TraySlot $mr={3}><BatteryIcon /></TraySlot>
          <TraySlot $mr={0}><DownCaret /></TraySlot>
        </Tray>
      </TopBar>
      <Body>
        <Dock>
          <DockSlot><FirefoxIcon /></DockSlot>
          <DockSlot $active><RunDots><i /><i /></RunDots><ChromeIcon /></DockSlot>
          <DockSlot><FilesIcon /></DockSlot>
          <DockSlot><WriterIcon /></DockSlot>
          <DockSlot><RunDots><i /><i /></RunDots><VscodeIcon /></DockSlot>
          <DockSlot><PostmanIcon /></DockSlot>
          <DockSlot><FzTile>Fz</FzTile></DockSlot>
          <DockSlot><TeamsIcon /></DockSlot>
          <DockSlot><RunDots><i /></RunDots><DolphinIcon /></DockSlot>
          <AppGrid>{Array.from({ length: 9 }, (_, i) => <i key={i} />)}</AppGrid>
        </Dock>
        <Main>
          <TabStrip>
            {tabs.map((t, i) => (
              <Tab key={i} $active={t.active} $sep={t.sep}>
                {t.icon}
                <TabTitle>{t.title}</TabTitle>
                <X size={16} />
              </Tab>
            ))}
            <NewTab><Plus size={18} /></NewTab>
            <WinControls>
              <WinSlot $w={39}><ChevronDown size={18} /></WinSlot>
              <WinSlot $w={39}><Minus size={14} /></WinSlot>
              <WinSlot $w={40}><Copy size={10} /></WinSlot>
              <WinSlot $w={40}><CloseDot><X size={13} /></CloseDot></WinSlot>
            </WinControls>
          </TabStrip>
          <Toolbar>
            <ToolBtn><ArrowLeft size={19} /></ToolBtn>
            <ToolBtn $off><ArrowRight size={19} /></ToolBtn>
            <ToolBtn><RotateCw size={17} /></ToolBtn>
            <Omnibox>
              <Info size={16} color="#44474b" />
              <UrlText><b>localhost</b>:3000/TechTicket/TestCases/11574/18959</UrlText>
              <OmniRight>
                <ToolBtn><ZoomOut size={17} /></ToolBtn>
                <ToolBtn><Share2 size={16} fill="#44474b" /></ToolBtn>
                <ToolBtn><Star size={17} /></ToolBtn>
              </OmniRight>
            </Omnibox>
            <ToolBtn><FaPuzzlePiece size={15} /></ToolBtn>
            <ToolBtn><SidePanelIcon /></ToolBtn>
            <ToolBtn><Avatar><FaUser size={12} /></Avatar></ToolBtn>
            <ToolBtn><MoreVertical size={18} /></ToolBtn>
          </Toolbar>
          <Page>
            <Sidebar>
              <Brand>
                <BrandCircle><ClipboardCheck size={31} strokeWidth={1.6} /></BrandCircle>
                <BrandName>My-Task</BrandName>
              </Brand>
              {['Dashboard', 'Ticket', 'Reports'].map((m) => (
                <MenuItem key={m}>
                  <FaHome size={16} />
                  <span>{m}</span>
                  <MenuCaret />
                </MenuItem>
              ))}
              <ModeList>
                <ModeRow><SideSwitch />Enable Dark Mode!</ModeRow>
                <ModeRow><SideSwitch />Enable RTL Mode!</ModeRow>
              </ModeList>
              <CollapseBtn><CollapseIcon /></CollapseBtn>
            </Sidebar>
            <Content>
              <Card>
                <StubRow>
                  <Stub $grey />
                  <Stub $boxed><StubInner /></Stub>
                  <Stub />
                  <Stub />
                </StubRow>
                <FieldGrid>
                  <div>
                    <Label>Test Description : <span>*</span></Label>
                    <TextBox readOnly />
                  </div>
                  <div>
                    <Label>Expected Result : <span>*</span></Label>
                    <TextBox readOnly />
                  </div>
                  <div>
                    <Label>Tester Comment :</Label>
                    <TextBox readOnly />
                  </div>
                </FieldGrid>
                <SeverityBlock>
                  <Label>Severity :<span>*</span></Label>
                  <Input readOnly $w={207} $h={30} $mt={9} />
                </SeverityBlock>
                <FormActions>
                  <ActionBtn $bg="#ffd500" $fg="#212529" $w={58} $h={36} $ring>Submit</ActionBtn>
                  <ActionBtn $bg={PURPLE} $w={56} $h={36}>Cancel</ActionBtn>
                </FormActions>
              </Card>
              <FilterCard>
                <div>
                  <Label>Testing Typee:</Label>
                  <SelectBox>
                    <SelectInner>
                      Select...
                      <SelectSep />
                      <SelectArrow><ChevronDown size={16} /></SelectArrow>
                    </SelectInner>
                  </SelectBox>
                </div>
                <SeverityFilter>
                  <Label>Severity:</Label>
                  <Input readOnly $w={321} $h={29} $mt={1} />
                </SeverityFilter>
                <FilterActions>
                  <ActionBtn $bg="#ffc000" $w={74} $h={28} $weight={600}><Search size={14} />Search</ActionBtn>
                  <ActionBtn $bg="#36bccd" $w={66} $h={28} $weight={600}><RefreshCw size={12} />Reset</ActionBtn>
                </FilterActions>
              </FilterCard>
              <Card>
                <NoteText>Note: User Can Send TestCases For Review only once</NoteText>
                <TableActions>
                  <ActionBtn $bg={PURPLE} $w={137} $h={32}>Add To Test Plan <FaSignInAlt size={12} /></ActionBtn>
                  <ActionBtn $bg="#ff2e63" $w={71} $h={32}><MdFileDownload size={15} />Export</ActionBtn>
                  <ActionBtn $bg="#ffc000" $fg="#212529" $w={168} $h={32}><MdFileDownload size={15} />Download Format File</ActionBtn>
                  <ActionBtn $bg={PURPLE} $w={80} $h={32}><MdFileUpload size={15} />Import</ActionBtn>
                </TableActions>
                <div>
                  <GridRow $h={47} $line>
                    <BoxCell><TickBox /></BoxCell>
                    <div />
                    {heads.map((h) => <HeadCell key={h}>{h}</HeadCell>)}
                  </GridRow>
                  <GridRow $h={43}>
                    <BoxCell><TickBox /></BoxCell>
                    <ExpandCell><ChevronRight size={16} strokeWidth={2.5} /></ExpandCell>
                    <DataCell><RowSwitch /></DataCell>
                    <ActionCell>
                      <RoundBtn $bg="#efefef" $w={25} $plain><FaPlusCircle size={12} /></RoundBtn>
                      <RoundBtn $bg="#36bccd" $w={29}><FaRegEdit size={13} /></RoundBtn>
                      <RoundBtn $bg="#ff2e63" $w={30}><FaHistory size={12} /></RoundBtn>
                    </ActionCell>
                    <DataCell>TT-01</DataCell>
                    <DataCell $pad={9}>WEBSITE</DataCell>
                    <DataCell />
                    <DataCell />
                    <DataCell>{' Testing\nFu....'}</DataCell>
                    <DataCell>{' Testing\nFi....'}</DataCell>
                    <DataCell>Functional</DataCell>
                    <DataCell $pad={8}>Testing Description</DataCell>
                    <DataCell $pad={8}>Record Should be Insterted</DataCell>
                  </GridRow>
                  <HScroll>
                    <ScrollArrow $dir="left" />
                    <HThumb />
                    <ScrollArrow $dir="right" />
                  </HScroll>
                </div>
                <Pager>
                  <PagerText $w={94}>Rows per page:</PagerText>
                  <PagerText $w={57}>10<MdArrowDropDown size={18} /></PagerText>
                  <PagerText $w={62}>1-1 of 1</PagerText>
                  <PagerBtn><MdFirstPage size={20} /></PagerBtn>
                  <PagerBtn><MdChevronLeft size={20} /></PagerBtn>
                  <PagerBtn><MdChevronRight size={20} /></PagerBtn>
                  <PagerBtn><MdLastPage size={20} /></PagerBtn>
                </Pager>
              </Card>
            </Content>
            <Toast>
              Record Inserted !!!
              <ToastClose><X size={14} /></ToastClose>
            </Toast>
            <PageThumb />
          </Page>
          <Dev>
            <DevBar $h={33}>
              <Slot $w={35}><InspectIcon /></Slot>
              <Slot $w={36}><DeviceIcon /></Slot>
              <VSep $l={4} $r={6} />
              {devTabs.map((t) => (
                <DevTab key={t.label} $w={t.w} $on={t.on}>
                  {t.label}
                  {t.flask && <FlaskConical size={16} />}
                </DevTab>
              ))}
              <BadgeBox $w={80} $auto>
                <ErrorDot><X size={9} strokeWidth={3} /></ErrorDot>2
                <WarnIcon />1
              </BadgeBox>
              <BadgeBox $w={48} $ml={3}><MessageIcon />15</BadgeBox>
              <VSep $l={8} $r={5} />
              <Slot><Settings size={18} /></Slot>
              <Slot><MoreVertical size={18} /></Slot>
              <Slot><X size={18} /></Slot>
            </DevBar>
            <DevBar $h={35} $thick>
              <Slot $w={35} $color="#e8092e">
                <svg width="19" height="19" viewBox="0 0 19 19">
                  <circle cx="9.500" cy="9.500" r="8.500" fill="none" stroke="#e8092e" strokeWidth="1.600" />
                  <rect x="5.500" y="5.500" width="8" height="8" rx="1" fill="#e8092e" />
                </svg>
              </Slot>
              <Slot $w={36}><Ban size={18} /></Slot>
              <VSep $l={4} $r={6} />
              <Slot><Funnel size={17} /></Slot>
              <Slot><Search size={17} /></Slot>
              <VSep $l={6} $r={0} />
              <CheckLabel $w={114} $ml={13}><DevCheck />Preserve log</CheckLabel>
              <VSep $l={6} $r={0} />
              <CheckLabel $w={129} $ml={12}><DevCheck />Disable cache</CheckLabel>
              <Throttle>No throttling</Throttle>
              <Slot $w={14}><DownTri /></Slot>
              <Slot $ml={11}><WifiGear /></Slot>
              <VSep $l={6} $r={4} />
              <Slot><Upload size={17} /></Slot>
              <Slot $ml={1}><Download size={17} /></Slot>
              <VSep $l={0} $r={6} $auto />
              <Slot><Settings size={18} /></Slot>
            </DevBar>
            <NetHead>
              <HeadGrid $h={32}>
                <NetCell>Name</NetCell>
                <NetCell>Status</NetCell>
                <NetCell>Type</NetCell>
                <NetCell>Initiator</NetCell>
                <NetCell>Size</NetCell>
                <NetCell>Time</NetCell>
              </HeadGrid>
              <WaterHead>Waterfall<DownTri $up /></WaterHead>
            </NetHead>
            <NetBody>
              <NetRows>
                {requests.map((r) => <NetRow key={r.name} r={r} />)}
              </NetRows>
              <Waterfall />
              <NetScroll>
                <DownTri $up $color="#444" />
                <NetThumb />
                <BottomTri><DownTri $color="#444" /></BottomTri>
              </NetScroll>
            </NetBody>
            <StatusBar>
              <StatusItem $w={103}>57 requests</StatusItem>
              <StatusItem $w={152}>1.1 MB transferred</StatusItem>
              <StatusItem $w={148}>17.4 MB resources</StatusItem>
              <StatusItem $w={120}>Finish: 1.6 min</StatusItem>
              <StatusItem $w={222} $color="#4a12c8">DOMContentLoaded: 167 ms</StatusItem>
              <StatusItem $last $color="#e3170a">Load: 297 ms</StatusItem>
            </StatusBar>
          </Dev>
        </Main>
      </Body>
    </Screen>
  );
}
